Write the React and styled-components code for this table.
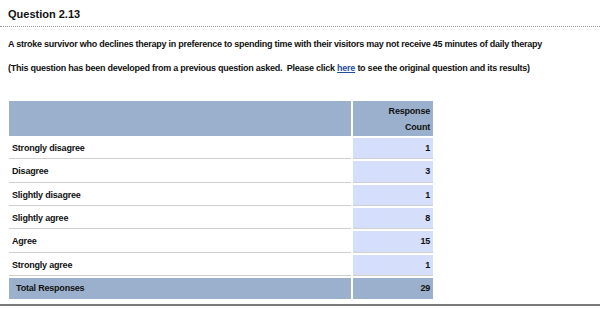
import React from 'react'
import styled, {createGlobalStyle} from 'styled-components'

const GlobalStyle = createGlobalStyle`
  html, body {
    margin: 0;
    padding: 0;
    background: #fff;
  }
  body {
    font-family: "Liberation Sans", Arial, Helvetica, sans-serif;
    color: #111;
  }
`;

const Page = styled.div`
  width: 600px;
  height: 310px;
  overflow: hidden;
  display: flex;
  flex-direction: column;
`;

const TitleBar = styled.div`
  padding: 8px 8px 5px;
  border-bottom: 1px dotted #9a9a9a;
`;

const Title = styled.h2`
  margin: 0;
  font-size: 11px;
  font-weight: bold;
  line-height: 13px;
`;

const Body = styled.div`
  padding: 12px 8px 0;
  display: flex;
  flex-direction: column;
  gap: 13px;
`;

const Text = styled.p`
  margin: 0;
  font-size: 9px;
  font-weight: bold;
  line-height: 11px;
  letter-spacing: -0.25px;
`;

const Link = styled.a`
  color: #1f4f9e;
  text-decoration: underline;
`;

const TableGrid = styled.div`
  margin: ${p => (p.$head ? '27px' : '2px')} 0 0 9px;
  display: grid;
  grid-template-columns: 342px 80px;
  grid-auto-rows: ${p => (p.$head ? '35px' : '21.33px')};
  gap: 2px;
  font-size: 9px;
  font-weight: bold;
  letter-spacing: -0.2px;
`;

const HeadCell = styled.div`
  background: #9ab0cc;
  line-height: 16px;
  text-align: right;
  padding: 2px 3px 0 0;
`;

const Row = styled.div`
  display: contents;
`;

const Label = styled.div`
  display: flex;
  align-items: center;
  padding-left: ${p => (p.$total ? '7px' : '3px')};
  background: ${p => (p.$total ? '#9ab0cc' : '#fff')};
  border-bottom: 1px solid ${p => (p.$total ? '#9ab0cc' : '#cfcfcf')};
`;

const Count = styled.div`
  display: flex;
  align-items: center;
  justify-content: flex-end;
  padding-right: 3px;
  background: ${p => (p.$total ? '#9ab0cc' : '#d5defb')};
  border-bottom: 1px solid ${p => (p.$total ? '#9ab0cc' : '#cfcfcf')};
`;

const FootLine = styled.div`
  margin-top: auto;
  margin-bottom: 4px;
  height: 2px;
  background: #7a7a7a;
`;

const rows = [
  ['Strongly disagree', 1],
  ['Disagree', 3],
  ['Slightly disagree', 1],
  ['Slightly agree', 8],
  ['Agree', 15],
  ['Strongly agree', 1],
]

export default function App() {
  return (
    <Page>
      <GlobalStyle />
      <TitleBar>
        <Title>Question 2.13</Title>
      </TitleBar>
      <Body>
        <Text>
          A stroke survivor who declines therapy in preference to spending time with their visitors may not receive 45 minutes of daily therapy
        </Text>
        <Text>
          (This question has been developed from a previous question asked.&nbsp; Please click <Link href="#">here</Link> to see the original question and its results)
        </Text>
      </Body>
      <TableGrid $head>
        <HeadCell />
        <HeadCell>Response<br />Count</HeadCell>
      </TableGrid>
      <TableGrid>
        {rows.map(([label, n]) => (
          <Row key={label}>
            <Label>{label}</Label>
            <Count>{n}</Count>
          </Row>
        ))}
        <Label $total>Total Responses</Label>
        <Count $total>29</Count>
      </TableGrid>
      <FootLine />
    </Page>
  )
}
